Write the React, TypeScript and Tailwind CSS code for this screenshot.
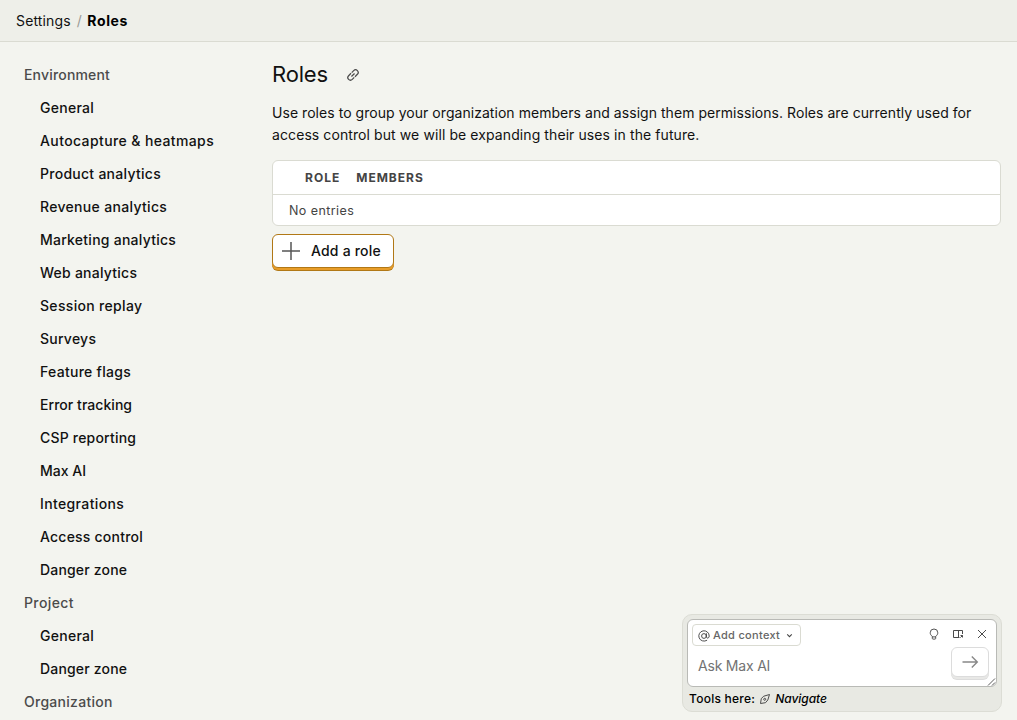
import React from 'react';

type NavEntry = { label: string; tracking: string; heading?: boolean };

const NAV: NavEntry[] = [
  { label: 'Environment', tracking: 'tracking-[0.18px]', heading: true },
  { label: 'General', tracking: 'tracking-[0.28px]' },
  { label: 'Autocapture & heatmaps', tracking: 'tracking-[0.39px]' },
  { label: 'Product analytics', tracking: 'tracking-[0.27px]' },
  { label: 'Revenue analytics', tracking: 'tracking-[0.32px]' },
  { label: 'Marketing analytics', tracking: 'tracking-[0.25px]' },
  { label: 'Web analytics', tracking: 'tracking-[0.24px]' },
  { label: 'Session replay', tracking: 'tracking-[0.32px]' },
  { label: 'Surveys', tracking: 'tracking-[0.25px]' },
  { label: 'Feature flags', tracking: 'tracking-[0.28px]' },
  { label: 'Error tracking', tracking: 'tracking-[0.05px]' },
  { label: 'CSP reporting', tracking: 'tracking-[0.2px]' },
  { label: 'Max AI', tracking: 'tracking-normal' },
  { label: 'Integrations', tracking: 'tracking-[0.37px]' },
  { label: 'Access control', tracking: 'tracking-[0.22px]' },
  { label: 'Danger zone', tracking: 'tracking-[0.18px]' },
  { label: 'Project', tracking: 'tracking-[0.38px]', heading: true },
  { label: 'General', tracking: 'tracking-[0.28px]' },
  { label: 'Danger zone', tracking: 'tracking-[0.18px]' },
  { label: 'Organization', tracking: 'tracking-[0.27px]', heading: true },
];

function Sidebar() {
  return (
    <nav className="flex w-[232px] shrink-0 flex-col gap-px px-4">
      {NAV.map((item, i) => (
        <a
          key={i}
          className={
            item.heading
              ? 'flex h-8 shrink-0 items-center pl-2 text-sm font-medium text-[#4b4b4b]'
              : 'flex h-8 shrink-0 items-center pl-6 text-sm font-medium text-[#111111]'
          }
        >
          <span className={item.tracking}>{item.label}</span>
        </a>
      ))}
    </nav>
  );
}

function LinkIcon() {
  return (
    <svg className="size-[14px]" viewBox="0 0 14 14" fill="none" stroke="currentColor" strokeWidth="1.25">
      <g transform="rotate(-45 7 7)">
        <path d="M6.200 9.600H3.400a2.600 2.600 0 0 1 0-5.200h3.400M7.800 4.400h2.800a2.600 2.600 0 0 1 0 5.200H7.200M4.800 7h4.400" />
      </g>
    </svg>
  );
}

function RolesTable() {
  return (
    <div className="flex h-[66px] flex-col overflow-hidden rounded-md border border-[#dadbd2] bg-white text-[#444444]">
      <div className="flex h-[34px] shrink-0 items-center gap-4 border-b border-[#dadbd2] pl-8 text-xs font-bold tracking-[1px]">
        <span>ROLE</span>
        <span>MEMBERS</span>
      </div>
      <div className="flex grow items-center pt-0.5 pl-4 text-[12.5px] tracking-[0.43px]">No entries</div>
    </div>
  );
}

function AssistantPanel() {
  return (
    <aside className="absolute top-[614px] left-[682px] flex h-[98px] w-[320px] flex-col rounded-[10px] border border-[#dcddd5] bg-[#e8e9e3] p-1">
      <div className="relative flex h-[68px] shrink-0 flex-col rounded-md border border-[#b9bab6] bg-white">
        <div className="flex items-start justify-between pt-1 pr-2 pl-1">
          <button className="flex h-[22px] w-[109px] items-center rounded border border-[#dadbd2] pt-px pl-[5px] text-[11px] font-medium text-[#666666]">
            <svg className="mr-[3px] size-3 text-[#444444]" viewBox="0 0 24 24" fill="none" stroke="currentColor" strokeWidth="1.9" strokeLinecap="round">
              <circle cx="12" cy="12" r="4.800" />
              <path d="M16.800 7.400v5.400c0 5 5.600 4.200 5.600-.8A10.400 10.400 0 1 0 17.500 20.800" />
            </svg>
            <span className="tracking-[0.3px]">Add context</span>
            <svg className="ml-1.5 size-[7px] text-[#444444]" viewBox="0 0 8 8" fill="none" stroke="currentColor" strokeWidth="1.2">
              <path d="M1.400 2.700 4 5.300 6.600 2.700" />
            </svg>
          </button>
          <div className="flex items-center gap-3 pt-1 text-[#4b4b4b]">
            <svg className="size-3" viewBox="0 0 12 12" fill="none" stroke="currentColor" strokeWidth="0.95">
              <path d="M4.300 8.300C2.900 7.400 2.200 6.100 2.200 4.800a3.800 3.800 0 0 1 7.600 0c0 1.300-.7 2.600-2.100 3.500v2.100a.7.700 0 0 1-.7.700H5a.7.700 0 0 1-.7-.7ZM4.300 8.900h3.400" />
            </svg>
            <svg className="size-3" viewBox="0 0 12 12" fill="none" stroke="currentColor" strokeWidth="1">
              <path d="M7.500 9.500h-6v-7h9V6M6.500 2.500v7M8.400 9.600l2.100-2.100M8.500 7.500h2v2" />
            </svg>
            <svg className="size-3" viewBox="0 0 12 12" fill="none" stroke="currentColor" strokeWidth="1">
              <path d="m2 2 8 8M10 2l-8 8" />
            </svg>
          </div>
        </div>
        <div className="flex justify-between pr-[7px] pl-[10px]">
          <span className="pt-[10px] text-sm leading-5 tracking-[-0.2px] text-[#737373]">Ask Max AI</span>
          <button className="mt-px flex h-[30px] w-[38px] items-center justify-center rounded-md border border-[#dcdcdc] bg-white text-[#888888] shadow-[0_2px_0_0_#e8e8e6,0_3px_0_0_#dcdcdc]">
            <svg className="size-[18px]" viewBox="0 0 18 18" fill="none" stroke="currentColor" strokeWidth="1.4">
              <path d="M1.500 9h14.500M10.800 3.500 16.300 9l-5.500 5.500" />
            </svg>
          </button>
        </div>
        <svg className="absolute right-0 bottom-0 size-[9px]" viewBox="0 0 9 9" stroke="#4b4b4b" strokeWidth="0.9">
          <path d="M1 8.500 8 1.500M5 8.500 8 5.500" />
        </svg>
      </div>
      <div className="flex grow items-center pt-[3px] pl-0.5 text-xs font-medium text-black">
        <span className="tracking-[0.25px]">Tools here:</span>
        <svg className="mr-1 ml-1 size-3 text-[#444444]" viewBox="0 0 12 12" fill="none" stroke="currentColor" strokeWidth="0.95">
          <path d="m1.500 10.500.8-5 2.500-2.300 5.700-1.700-1.700 5.500-2.300 2.700Z" />
          <circle cx="5.700" cy="6.300" r="1" />
        </svg>
        <span className="tracking-[-0.05px] italic">Navigate</span>
      </div>
    </aside>
  );
}

export default function App() {
  return (
    <div className="relative flex h-[720px] w-[1017px] flex-col overflow-hidden bg-[#f3f4ef] font-['Inter',sans-serif] text-sm text-[#111111]">
      <header className="flex h-[42px] shrink-0 items-center border-b border-[#dadbd2] bg-[#eeefe9] px-4">
        <span className="tracking-[0.15px]">Settings</span>
        <span className="mr-[5.5px] ml-1.5 text-[#9a9a96]">/</span>
        <span className="font-bold tracking-[0.6px] text-black">Roles</span>
      </header>
      <div className="flex min-h-0 grow gap-6 pt-[17px] pr-4">
        <Sidebar />
        <main className="ml-4 flex min-w-0 grow flex-col">
          <div className="flex h-8 items-center">
            <h2 className="w-[74px] text-[22px] font-normal tracking-[-0.2px]">Roles</h2>
            <span className="text-[#4b4b4b]"><LinkIcon /></span>
          </div>
          <p className="mt-[11px] mb-[14px] leading-[22px] whitespace-nowrap">
            <span className="tracking-[0.045px]">
              Use roles to group your organization members and assign them permissions. Roles are currently used for
            </span>
            <br />
            <span className="tracking-[0.09px]">access control but we will be expanding their uses in the future.</span>
          </p>
          <RolesTable />
          <button className="mt-2 flex h-[34px] w-[122px] items-center rounded-md border border-[#b17816] bg-white pl-[9px] font-medium shadow-[0_2px_0_0_#e89d29,0_3px_0_0_#b17816]">
            <svg className="mr-[11px] size-[18px] text-[#555555]" viewBox="0 0 18 18" fill="none" stroke="currentColor" strokeWidth="1.5">
              <path d="M9 0v18M0 9h18" />
            </svg>
            <span className="tracking-[0.2px]">Add a role</span>
          </button>
        </main>
      </div>
      <AssistantPanel />
    </div>
  );
}
